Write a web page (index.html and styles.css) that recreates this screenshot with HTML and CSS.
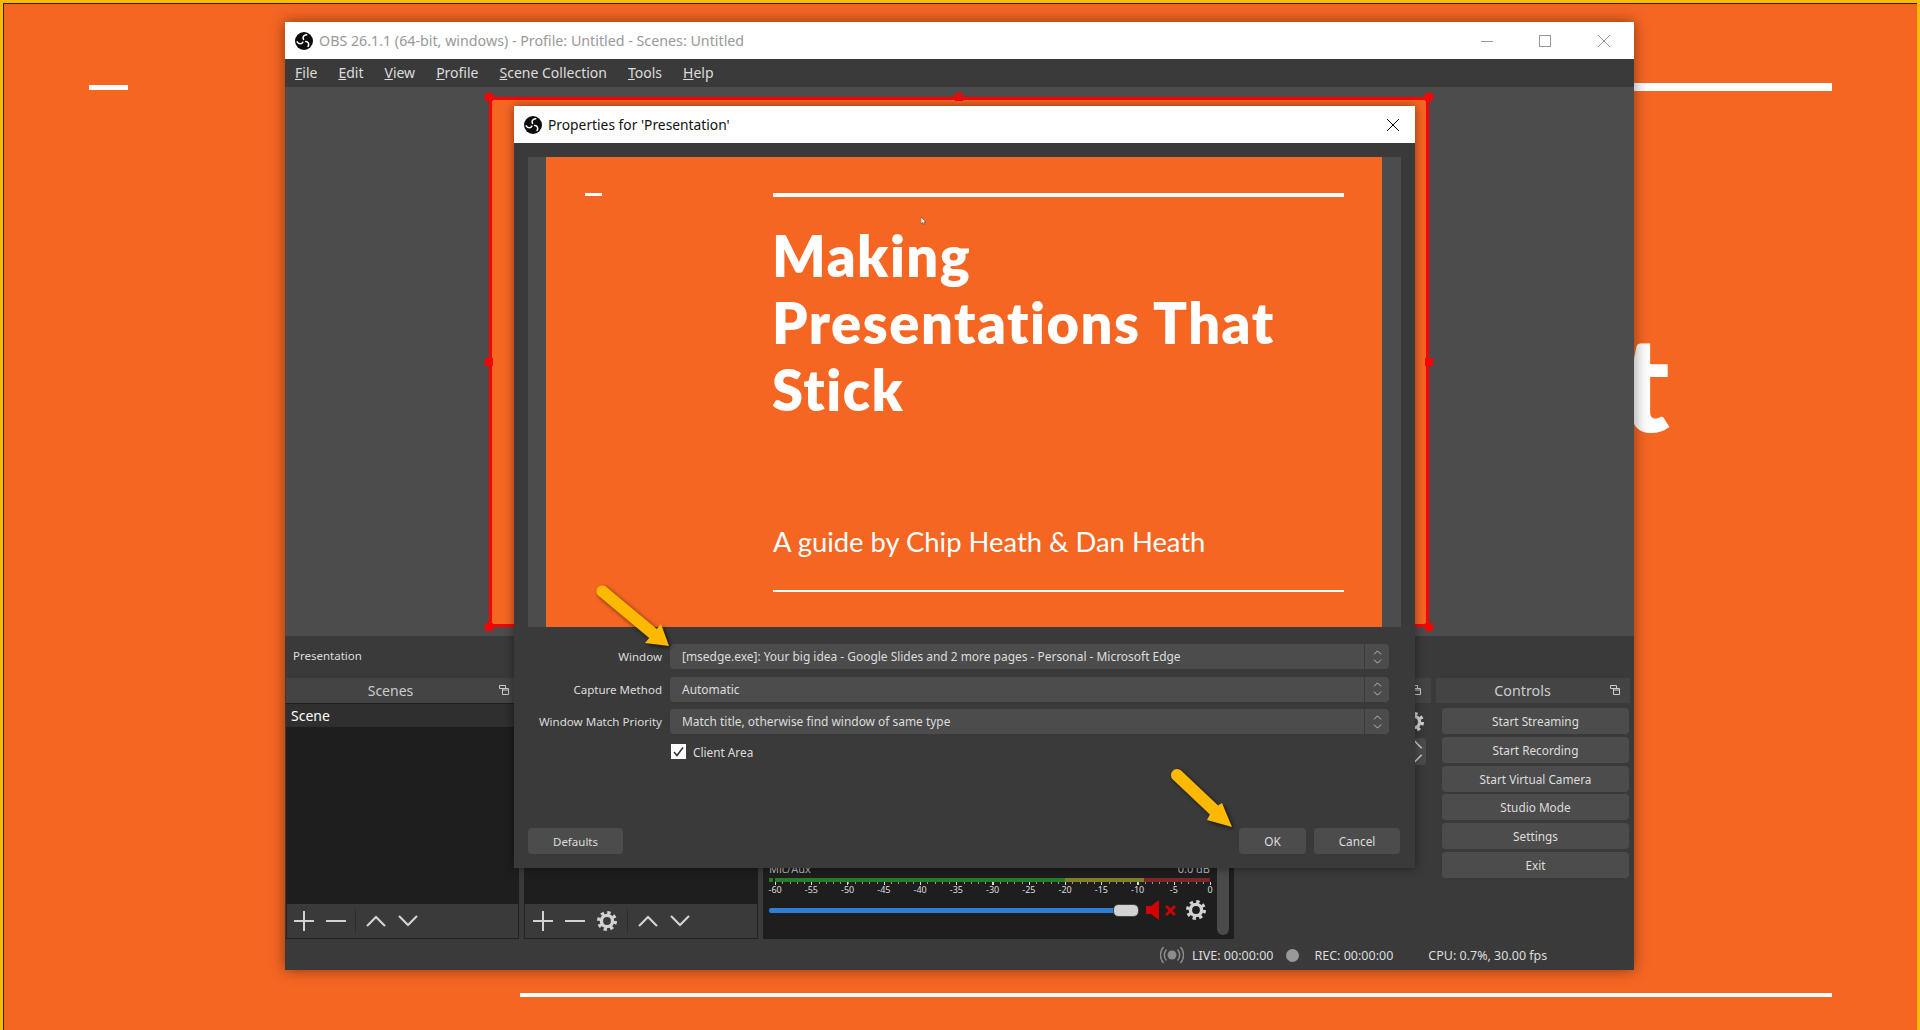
FILE: index.html
```html
<!DOCTYPE html>
<html lang="en">
<head>
    <meta charset="UTF-8">
    <title>OBS Properties</title>
    <link rel="stylesheet" href="styles.css">
</head>
<body>
    <svg class="sprite" width="0" height="0">
        <symbol id="obs-logo" viewBox="0 0 20 20">
            <circle cx="10" cy="10" r="10" fill="#0c0c0c"/>
            <g fill="none" stroke="#fff" stroke-width="1.7" stroke-linecap="round">
                <path d="M9.5 8.2C8 6 9.5 3.2 13 3"/>
                <path d="M9.5 8.2C8 6 9.5 3.2 13 3" transform="rotate(120 10 10)"/>
                <path d="M9.5 8.2C8 6 9.5 3.2 13 3" transform="rotate(240 10 10)"/>
            </g>
        </symbol>
        <symbol id="gear" viewBox="0 0 20 20">
            <circle cx="10" cy="10" r="8.4" fill="none" stroke="currentColor" stroke-width="3.2" stroke-dasharray="3.3 3.3"/>
            <circle cx="10" cy="10" r="5.6" fill="none" stroke="currentColor" stroke-width="3.4"/>
        </symbol>
        <symbol id="plus" viewBox="0 0 20 20">
            <path d="M0 10H20M10 0V20" stroke="currentColor" stroke-width="2"/>
        </symbol>
        <symbol id="minus" viewBox="0 0 20 20">
            <path d="M0 10H20" stroke="currentColor" stroke-width="2"/>
        </symbol>
        <symbol id="up" viewBox="0 0 20 12">
            <path d="M1 11L10 2L19 11" fill="none" stroke="currentColor" stroke-width="2.2"/>
        </symbol>
        <symbol id="down" viewBox="0 0 20 12">
            <path d="M1 1L10 10L19 1" fill="none" stroke="currentColor" stroke-width="2.2"/>
        </symbol>
        <symbol id="float" viewBox="0 0 10 10">
            <path d="M.5 .5H6.500V3.500H.5ZM3.500 3.500H9.500V9.500H3.500ZM3.500 5H9.500" fill="none" stroke="currentColor"/>
        </symbol>
    </svg>

    <!-- slide showing behind the windows -->
    <div class="bg-dash"></div>
    <div class="bg-rule-top"></div>
    <div class="bg-rule-bottom"></div>
    <div class="bg-letter">t</div>

    <div class="obs-window">
        <div class="titlebar">
            <svg class="logo"><use href="#obs-logo"/></svg>
            <span class="titlebar-text">OBS 26.1.1 (64-bit, windows) - Profile: Untitled - Scenes: Untitled</span>
            <div class="win-controls">
                <span class="win-btn"><svg width="12" height="12"><path d="M0 6.500H12" stroke="#999"/></svg></span>
                <span class="win-btn"><svg width="12" height="12"><rect x=".5" y=".5" width="11" height="11" fill="none" stroke="#999"/></svg></span>
                <span class="win-btn"><svg width="12" height="12"><path d="M0 0L12 12M12 0L0 12" stroke="#999"/></svg></span>
            </div>
        </div>
        <nav class="menubar">
            <span class="menu-item"><u>F</u>ile</span>
            <span class="menu-item"><u>E</u>dit</span>
            <span class="menu-item"><u>V</u>iew</span>
            <span class="menu-item"><u>P</u>rofile</span>
            <span class="menu-item"><u>S</u>cene Collection</span>
            <span class="menu-item"><u>T</u>ools</span>
            <span class="menu-item"><u>H</u>elp</span>
        </nav>

        <div class="preview">
            <div class="source-box">
                <i class="handle h-tl"></i><i class="handle h-tm"></i><i class="handle h-tr"></i>
                <i class="handle h-ml"></i><i class="handle h-mr"></i>
                <i class="handle h-bl"></i><i class="handle h-bm"></i><i class="handle h-br"></i>
            </div>
        </div>

        <div class="context-bar">Presentation</div>

        <div class="docks">
            <section class="dock dock-scenes">
                <div class="dock-title">Scenes<svg class="float-icon"><use href="#float"/></svg></div>
                <div class="list">
                    <div class="list-row">Scene</div>
                </div>
                <div class="toolbar">
                    <button class="tool"><svg><use href="#plus"/></svg></button>
                    <button class="tool"><svg><use href="#minus"/></svg></button>
                    <span class="tool-sep"></span>
                    <button class="tool"><svg class="chevron"><use href="#up"/></svg></button>
                    <button class="tool"><svg class="chevron"><use href="#down"/></svg></button>
                </div>
            </section>

            <section class="dock dock-sources">
                <div class="dock-title"></div>
                <div class="list"></div>
                <div class="toolbar">
                    <button class="tool"><svg><use href="#plus"/></svg></button>
                    <button class="tool"><svg><use href="#minus"/></svg></button>
                    <button class="tool"><svg><use href="#gear"/></svg></button>
                    <span class="tool-sep"></span>
                    <button class="tool"><svg class="chevron"><use href="#up"/></svg></button>
                    <button class="tool"><svg class="chevron"><use href="#down"/></svg></button>
                </div>
            </section>

            <section class="dock dock-mixer">
                <div class="mixer-strip">
                    <div class="mixer-head"><span>Mic/Aux</span><span>0.0 dB</span></div>
                    <div class="meter">
                        <span class="meter-stub"></span>
                        <span class="meter-green"></span>
                        <span class="meter-olive"></span>
                        <span class="meter-red"></span>
                    </div>
                    <div class="meter-ticks"></div>
                    <div class="meter-labels">
                        <span>-60</span><span>-55</span><span>-50</span><span>-45</span><span>-40</span><span>-35</span><span>-30</span><span>-25</span><span>-20</span><span>-15</span><span>-10</span><span>-5</span><span>0</span>
                    </div>
                    <div class="fader-row">
                        <div class="fader"><div class="fader-fill"></div><div class="fader-knob"></div></div>
                        <svg class="mute" viewBox="0 0 30 20">
                            <path d="M0 6H5L13 0V20L5 14H0Z" fill="#d40000"/>
                            <path d="M20 6L29 15M29 6L20 15" stroke="#d40000" stroke-width="2.600"/>
                        </svg>
                        <svg class="mixer-gear"><use href="#gear"/></svg>
                    </div>
                </div>
                <div class="scrollbar"></div>
            </section>

            <section class="dock dock-transitions">
                <div class="dock-title"><svg class="float-icon"><use href="#float"/></svg></div>
                <div class="transition-body">
                    <svg class="transition-gear"><use href="#gear"/></svg>
                    <div class="spin-buttons">
                        <svg class="spin-icon" viewBox="0 0 20 12"><use href="#up"/></svg>
                        <svg class="spin-icon" viewBox="0 0 20 12"><use href="#down"/></svg>
                    </div>
                </div>
            </section>

            <section class="dock dock-controls">
                <div class="dock-title">Controls<svg class="float-icon"><use href="#float"/></svg></div>
                <div class="control-list">
                    <button class="btn">Start Streaming</button>
                    <button class="btn">Start Recording</button>
                    <button class="btn">Start Virtual Camera</button>
                    <button class="btn">Studio Mode</button>
                    <button class="btn">Settings</button>
                    <button class="btn">Exit</button>
                </div>
            </section>
        </div>

        <footer class="statusbar">
            <svg class="live-icon" viewBox="0 0 24 18">
                <circle cx="12" cy="9" r="4.500" fill="#8c8c8c"/>
                <path d="M6.500 3.500a8 8 0 0 0 0 11M17.500 3.500a8 8 0 0 1 0 11M3.500 1a12 12 0 0 0 0 16M20.500 1a12 12 0 0 1 0 16" fill="none" stroke="#8c8c8c" stroke-width="1.500"/>
            </svg>
            <span class="status-live">LIVE: 00:00:00</span>
            <span class="rec-dot"></span>
            <span class="status-rec">REC: 00:00:00</span>
            <span class="status-cpu">CPU: 0.7%, 30.00 fps</span>
        </footer>
    </div>

    <div class="dialog">
        <div class="titlebar dialog-titlebar">
            <svg class="logo"><use href="#obs-logo"/></svg>
            <span class="dialog-title">Properties for 'Presentation'</span>
            <span class="dialog-close"><svg width="12" height="12"><path d="M0 0L12 12M12 0L0 12" stroke="#000"/></svg></span>
        </div>
        <div class="dialog-body">
            <div class="dialog-preview">
                <div class="slide">
                    <div class="slide-dash"></div>
                    <div class="slide-main">
                        <div class="slide-rule"></div>
                        <h1 class="slide-title">Making<br>Presentations That<br>Stick</h1>
                        <p class="slide-sub">A guide by Chip Heath &amp; Dan Heath</p>
                        <div class="slide-rule slide-rule-thin"></div>
                    </div>
                    <svg class="cursor" width="6" height="8" viewBox="0 0 6 8"><path d="M0 0L5 5H3L4 8H3L2 5.500L0 6.500Z" fill="#fff" stroke="#333" stroke-width=".5"/></svg>
                </div>
            </div>

            <div class="form">
                <label class="form-label">Window</label>
                <div class="select"><span class="select-text">[msedge.exe]: Your big idea - Google Slides and 2 more pages - Personal - Microsoft Edge</span><span class="select-arrows"><svg viewBox="0 0 10 16"><path d="M1 5L5 1L9 5M1 11L5 15L9 11" fill="none" stroke="#ccc"/></svg></span></div>
                <label class="form-label">Capture Method</label>
                <div class="select"><span class="select-text">Automatic</span><span class="select-arrows"><svg viewBox="0 0 10 16"><path d="M1 5L5 1L9 5M1 11L5 15L9 11" fill="none" stroke="#ccc"/></svg></span></div>
                <label class="form-label">Window Match Priority</label>
                <div class="select"><span class="select-text">Match title, otherwise find window of same type</span><span class="select-arrows"><svg viewBox="0 0 10 16"><path d="M1 5L5 1L9 5M1 11L5 15L9 11" fill="none" stroke="#ccc"/></svg></span></div>
                <span></span>
                <div class="check-row">
                    <span class="checkbox"><svg width="15" height="15"><path d="M3 8L6 11.500L12 3.500" fill="none" stroke="#333" stroke-width="1.500"/></svg></span>
                    <span>Client Area</span>
                </div>
            </div>

            <div class="dialog-buttons">
                <button class="btn btn-defaults">Defaults</button>
                <button class="btn btn-ok">OK</button>
                <button class="btn btn-cancel">Cancel</button>
            </div>
        </div>
    </div>

    <!-- yellow callout arrows -->
    <svg class="arrow arrow-window" width="90" height="80" viewBox="0 0 90 80">
        <path d="M15.800 8.400L66.800 50.900L71 46L79 68L55 65L59.200 60.100L8.200 17.600A6 6 0 0 1 15.800 8.400Z"/>
    </svg>
    <svg class="arrow arrow-ok" width="80" height="76" viewBox="0 0 80 76">
        <path d="M16.100 8.600L53.100 43.600L57 41L67 65L42 58L44.900 52.400L7.900 17.400A6 6 0 0 1 16.100 8.600Z"/>
    </svg>
</body>
</html>
```

FILE: styles.css
```css
* {
    box-sizing: border-box;
}

body {
    margin: 0;
    height: 1030px;
    overflow: hidden;
    position: relative;
    background: #f66623;
    font-family: 'Noto Sans', 'Open Sans', sans-serif;
    font-size: 12px;
    color: #ddd;
    border-top: 3px solid #ffb900;
    border-left: 3px solid #ffb900;
    border-right: 3px solid #ffb900;
}

body::before {
    content: '';
    position: absolute;
    inset: 0 0 -10px 0;
    border-top: 1px solid #222;
    border-left: 1px solid #222;
}

button {
    font: inherit;
}

.sprite {
    position: absolute;
}

/* slide behind the windows */
.bg-dash {
    position: absolute;
    left: 86px;
    top: 82px;
    width: 39px;
    height: 5px;
    background: #fff;
}

.bg-rule-top {
    position: absolute;
    left: 1620px;
    top: 80px;
    width: 209px;
    height: 8px;
    background: #fff;
}

.bg-rule-bottom {
    position: absolute;
    left: 517px;
    top: 990px;
    width: 1312px;
    height: 4px;
    background: #fff;
}

.bg-letter {
    position: absolute;
    left: 1617px;
    top: 298px;
    font-family: Lato, sans-serif;
    font-weight: 900;
    font-size: 132px;
    line-height: 160px;
    color: #fff;
}

/* main window */
.obs-window {
    position: absolute;
    left: 282px;
    top: 19px;
    width: 1349px;
    height: 948px;
    display: flex;
    flex-direction: column;
    background: #3a3a3a;
    box-shadow: 0 0 14px rgba(0, 0, 0, 0.45);
}

.titlebar {
    height: 37px;
    flex: none;
    display: flex;
    align-items: center;
    background: #fff;
    padding-left: 10px;
}

.logo {
    width: 18px;
    height: 18px;
    flex: none;
}

.titlebar-text {
    margin-left: 6px;
    font-size: 14.25px;
    color: #999;
}

.win-controls {
    display: flex;
    margin-left: auto;
    padding-right: 1px;
}

.win-btn {
    width: 58.5px;
    display: flex;
    justify-content: center;
}

.menubar {
    height: 28px;
    flex: none;
    display: flex;
    align-items: center;
    gap: 21px;
    padding: 0 0 2px 10px;
    background: #3a3a3a;
    font-size: 14px;
    color: #ddd;
}

.preview {
    height: 549px;
    flex: none;
    position: relative;
    background: #4c4c4c;
}

.source-box {
    position: absolute;
    left: 204px;
    top: 10px;
    width: 940px;
    height: 530px;
    background: #f66623;
    border: 3px solid #f00;
}

.handle {
    position: absolute;
    width: 8px;
    height: 8px;
    background: #f00;
}

.h-tl { left: -7px; top: -7px; }
.h-tm { left: calc(50% - 4px); top: -7px; }
.h-tr { right: -7px; top: -7px; }
.h-ml { left: -7px; top: calc(50% - 4px); }
.h-mr { right: -7px; top: calc(50% - 4px); }
.h-bl { left: -7px; bottom: -7px; }
.h-bm { left: calc(50% - 4px); bottom: -7px; }
.h-br { right: -7px; bottom: -7px; }

.context-bar {
    height: 42px;
    flex: none;
    display: flex;
    align-items: center;
    padding: 0 0 3px 8px;
    font-size: 11.5px;
}

.docks {
    height: 262px;
    flex: none;
    display: flex;
    padding-left: 1px;
}

.dock {
    display: flex;
    flex-direction: column;
    flex: none;
}

.dock-scenes { width: 233px; margin-right: 5px; }
.dock-sources { width: 234px; margin-right: 5px; }
.dock-mixer { width: 471px; margin-right: 4px; }
.dock-transitions { width: 193px; margin-right: 5px; }
.dock-controls { width: 194px; }

.dock-title {
    height: 25px;
    flex: none;
    position: relative;
    display: flex;
    align-items: center;
    justify-content: center;
    padding-right: 24px;
    background: #444;
    font-size: 14px;
    color: #ccc;
}

.dock-controls .dock-title {
    padding-right: 21px;
    font-size: 14.3px;
}

.float-icon {
    position: absolute;
    right: 10px;
    top: 7px;
    width: 10px;
    height: 10px;
    color: #ccc;
}

.list {
    height: 201px;
    flex: none;
    padding-top: 1px;
    background: #1e1e1e;
}

.list-row {
    height: 23px;
    display: flex;
    align-items: center;
    padding-left: 5px;
    background: #2f2f2f;
    font-size: 14px;
    color: #fff;
}

.toolbar {
    height: 35px;
    flex: none;
    display: flex;
    align-items: center;
    padding-left: 2px;
    background: #3a3a3a;
    border-bottom: 1px solid #222;
    border-left: 1px solid #222;
    border-right: 1px solid #222;
}

.dock-scenes .toolbar {
    padding-left: 1px;
}

.tool {
    width: 32px;
    height: 32px;
    flex: none;
    display: flex;
    align-items: center;
    justify-content: center;
    padding: 0;
    background: none;
    border: 0;
    color: #d2d2d2;
}

.tool svg {
    width: 20px;
    height: 20px;
}

.tool .chevron {
    height: 12px;
}

.tool-sep {
    width: 1px;
    height: 24px;
    margin: 0 4px 0 3px;
    background: #2c2c2c;
}

.dock-sources .tool-sep {
    margin: 0 4px 0 4px;
}

.dock-mixer {
    flex-direction: row;
    height: 261px;
    background: #1e1e1e;
    position: relative;
}

.mixer-strip {
    width: 447px;
    padding: 185px 0 0 6px;
}

.mixer-head {
    display: flex;
    justify-content: space-between;
    height: 11px;
    line-height: 11px;
    font-size: 11px;
    color: #bbb;
}

.meter {
    display: flex;
    height: 4px;
    margin-top: 4px;
    width: 441px;
}

.meter-stub { width: 4px; margin-right: 2px; background: #267f26; }
.meter-green { width: 290px; background: #267f26; }
.meter-olive { width: 79px; background: #7f7f26; }
.meter-red { width: 66px; background: #7f2626; }

.meter-ticks {
    height: 3px;
    width: 442px;
    background:
        repeating-linear-gradient(to right, #ddd 0 1px, transparent 1px 36.25px) 6px 0 / 100% 3px no-repeat,
        repeating-linear-gradient(to right, #999 0 1px, transparent 1px 7.25px) 6px 0 / 100% 2px no-repeat;
}

.meter-labels {
    display: grid;
    grid-template-columns: repeat(13, 36.25px);
    margin-left: -12px;
    height: 10px;
    line-height: 10px;
    font-size: 9px;
    color: #ddd;
    text-align: center;
}

.fader-row {
    display: flex;
    align-items: center;
    height: 20px;
    margin-top: 5px;
}

.fader {
    width: 369px;
    height: 11px;
    display: flex;
    align-items: center;
}

.fader-fill {
    width: 345px;
    height: 5px;
    border-radius: 2px 0 0 2px;
    background: #2f7fd6;
}

.fader-knob {
    width: 24px;
    height: 11px;
    border-radius: 4px;
    background: #d2d2d2;
    outline: 1px solid #444;
}

.mute {
    width: 30px;
    height: 20px;
    margin-left: 8px;
}

.mixer-gear {
    width: 20px;
    height: 20px;
    margin-left: 10px;
    color: #d2d2d2;
}

.scrollbar {
    width: 12px;
    margin-top: 0;
    height: 257px;
    margin-left: 7px;
    border-radius: 0 0 6px 6px;
    background: #4a4a4a;
}

.transition-body {
    position: relative;
    flex: 1;
}

.transition-gear {
    position: absolute;
    right: 7px;
    top: 9px;
    width: 20px;
    height: 20px;
    color: #d2d2d2;
}

.spin-buttons {
    position: absolute;
    right: 5px;
    top: 35px;
    width: 30px;
    height: 27px;
    display: flex;
    flex-direction: column;
    align-items: flex-end;
    justify-content: space-around;
    padding-right: 3px;
    border-radius: 4px;
    background: #4c4c4c;
    color: #ccc;
}

.spin-icon {
    width: 16px;
    height: 9px;
}

.control-list {
    display: flex;
    flex-direction: column;
    gap: 2.8px;
    padding: 5px 1px 0 6px;
}

.btn {
    height: 26px;
    padding: 0;
    border: 0;
    border-radius: 4px;
    background: #4c4c4c;
    color: #ddd;
    font-size: 11.8px;
}

.statusbar {
    flex: 1;
    display: flex;
    align-items: center;
    padding-left: 875px;
    font-size: 12.5px;
    color: #ddd;
}

.live-icon {
    width: 24px;
    height: 18px;
}

.status-live { margin-left: 8px; }

.rec-dot {
    width: 13px;
    height: 13px;
    margin-left: 13px;
    border-radius: 50%;
    background: #999;
}

.status-rec { margin-left: 15px; }
.status-cpu { margin-left: 35px; }

/* properties dialog */
.dialog {
    position: absolute;
    left: 511px;
    top: 103px;
    width: 901px;
    height: 762px;
    display: flex;
    flex-direction: column;
    background: #3a3a3a;
    box-shadow: 0 0 10px rgba(0, 0, 0, 0.45);
}

.dialog-title {
    margin-left: 6px;
    font-size: 13.8px;
    color: #111;
}

.dialog-close {
    margin-left: auto;
    width: 44px;
    display: flex;
    justify-content: center;
}

.dialog-body {
    flex: 1;
    display: flex;
    flex-direction: column;
    padding: 14px 14px 14px;
}

.dialog-preview {
    height: 470px;
    flex: none;
    padding: 0 19px 0 18px;
    background: #4c4c4c;
}

.slide {
    height: 100%;
    position: relative;
    display: grid;
    grid-template-columns: 227px 571px;
    align-items: start;
    padding-top: 36px;
    background: #f66623;
    overflow: hidden;
}

.slide-dash {
    width: 17px;
    height: 3px;
    margin-left: 39px;
    background: #fff;
}

.slide-rule {
    height: 4px;
    background: #fff;
}

.slide-rule-thin {
    height: 2px;
    margin-top: 31px;
}

.slide-title {
    margin: 25px 0 0 -1px;
    font-family: Lato, sans-serif;
    font-weight: 800;
    font-size: 56px;
    letter-spacing: 1.5px;
    line-height: 67px;
    color: #fff;
}

.slide-sub {
    margin: 102px 0 0;
    font-family: Lato, sans-serif;
    font-size: 27.4px;
    line-height: 34px;
    color: #fff;
}

.cursor {
    position: absolute;
    left: 375px;
    top: 60px;
}

.form {
    display: grid;
    grid-template-columns: 134px 1fr;
    column-gap: 8px;
    row-gap: 7.5px;
    padding: 17px 12px 0 0;
}

.form-label {
    display: flex;
    align-items: center;
    justify-content: flex-end;
    white-space: nowrap;
    font-size: 11.55px;
}

.select {
    height: 25px;
    display: flex;
    align-items: center;
    border-radius: 4px;
    background: #4c4c4c;
    font-size: 11.95px;
}

.select-text {
    flex: 1;
    padding-left: 12px;
}

.select-arrows {
    width: 25px;
    height: 100%;
    display: flex;
    align-items: center;
    justify-content: center;
    border-left: 1px solid #3a3a3a;
}

.select-arrows svg {
    width: 9px;
    height: 14px;
}

.check-row {
    display: flex;
    align-items: center;
    gap: 7px;
    height: 20px;
    font-size: 11.8px;
}

.checkbox {
    width: 15px;
    height: 15px;
    margin-left: 1px;
    background: #fff;
}

.dialog-buttons {
    margin-top: auto;
    display: flex;
    gap: 8px;
    padding-right: 1px;
}

.btn-defaults { width: 95px; margin-right: auto; font-size: 11.5px; }
.btn-ok { width: 67px; }
.btn-cancel { width: 86px; }

.arrow {
    position: absolute;
    overflow: visible;
    fill: #fdb900;
    filter: drop-shadow(2px 2px 2px rgba(0, 0, 0, 0.6));
}

.arrow-window { left: 587px; top: 575px; }
.arrow-ok { left: 1162px; top: 759px; }
```
